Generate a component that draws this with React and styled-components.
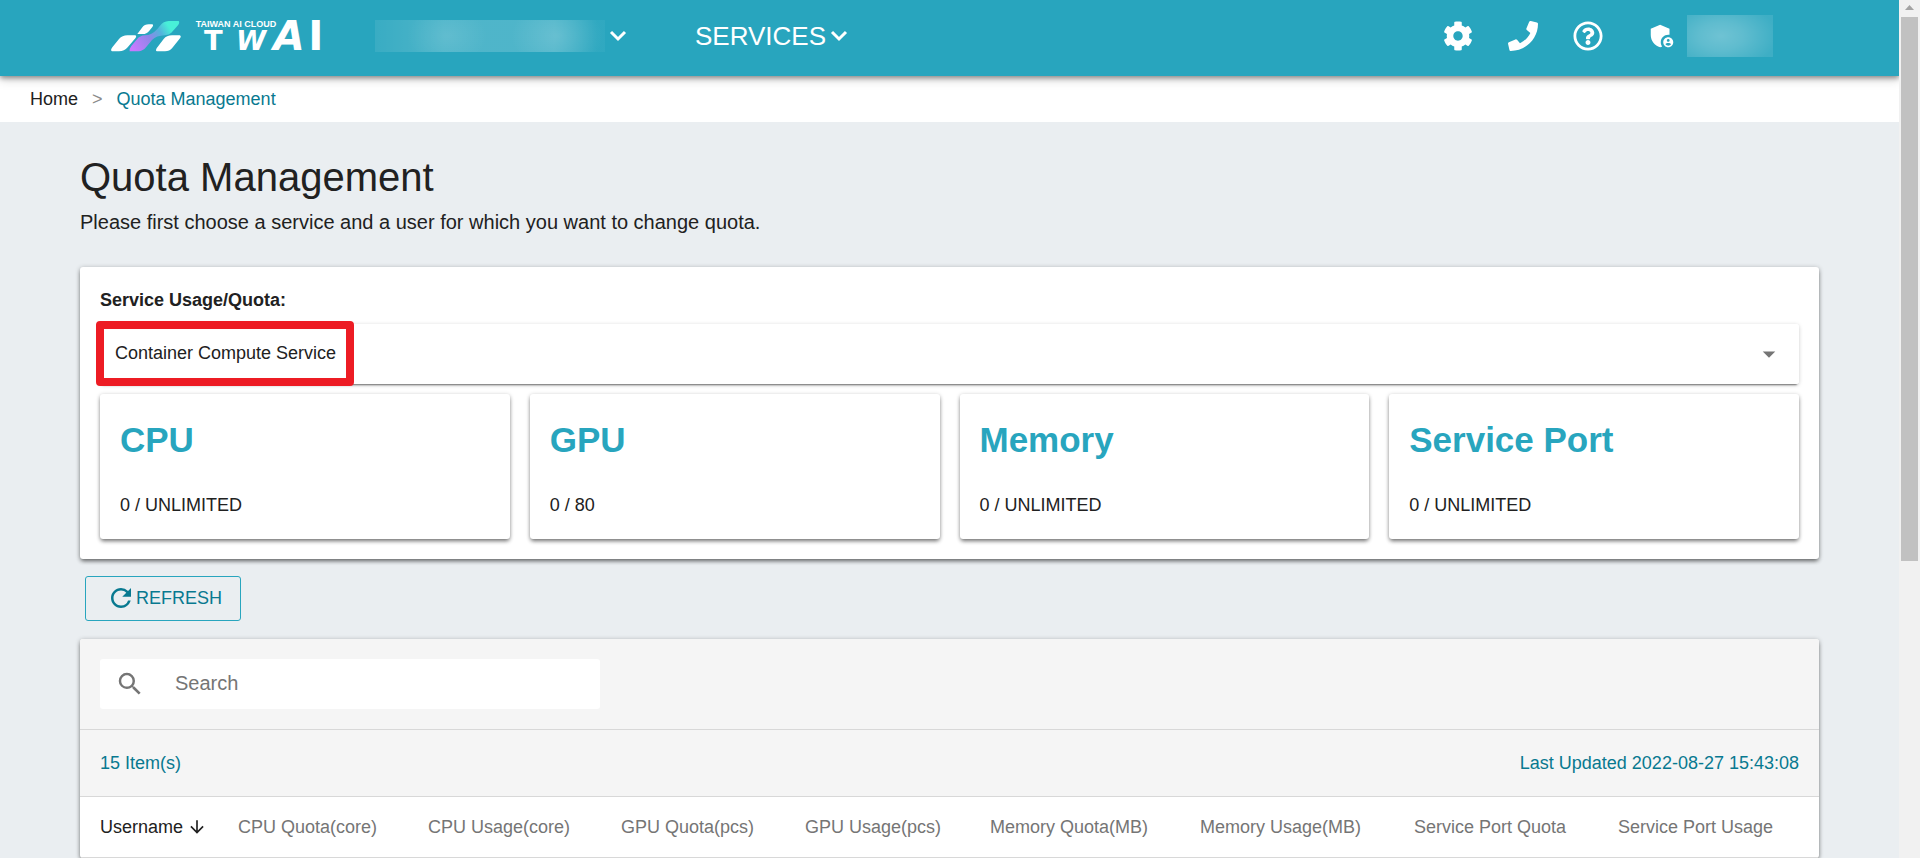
import styled, { createGlobalStyle } from "styled-components";
import { FaCog, FaPhone, FaRegQuestionCircle } from "react-icons/fa";
import {
    MdAdminPanelSettings,
    MdArrowDownward,
    MdArrowDropDown,
    MdRefresh,
    MdSearch,
} from "react-icons/md";

const GlobalStyle = createGlobalStyle`
    *{
        box-sizing: border-box;
    }
    body{
        margin: 0;
        background-color: #eaeef1;
        color: #212121;
        font-family: "Liberation Sans", Arial, sans-serif;
        font-size: 18px;
        line-height: 24px;
        overflow: hidden;
    }
    button, input, select{
        font: inherit;
        color: inherit;
    }
`;

const Window = styled.div`
    display: flex;
    height: 100vh;
    overflow: hidden;
`;

const Page = styled.div`
    flex: 1;
    min-width: 0;
    overflow: hidden;
`;

const Header = styled.header`
    position: relative;
    z-index: 1;
    display: flex;
    align-items: center;
    height: 76px;
    padding: 0 126px 4px 110px;
    background-color: #28a5be;
    color: #fff;
    box-shadow: 0 2px 5px rgba(0,0,0,.4), 0 4px 10px rgba(0,0,0,.15);
`;

const LogoLink = styled.a`
    display: flex;
    margin-right: 53px;
`;

const MenuButton = styled.button`
    display: flex;
    align-items: center;
    gap: 4px;
    padding: 0;
    margin-right: 68px;
    border: 0;
    background: none;
    font-size: 26px;
    line-height: 32px;
    cursor: pointer;
`;

const HiddenName = styled.span`
    width: 230px;
    height: 32px;
    background:
        radial-gradient(ellipse 40px 30px at 72px 16px, rgba(255,255,255,.1), transparent),
        radial-gradient(ellipse 46px 34px at 182px 16px, rgba(255,255,255,.14), transparent),
        linear-gradient(90deg, rgba(255,255,255,.08), rgba(255,255,255,.18) 30%, rgba(255,255,255,.18) 78%, rgba(255,255,255,.04) 96%);
`;

const HiddenUser = styled.span`
    width: 86px;
    height: 42px;
    background: radial-gradient(ellipse 56px 34px at 34px 21px, rgba(255,255,255,.33), rgba(255,255,255,.26) 40%, rgba(255,255,255,.1));
`;

const HeaderIcons = styled.nav`
    display: flex;
    align-items: center;
    gap: 35px;
    margin-left: auto;
`;

const IconButton = styled.button`
    display: flex;
    align-items: center;
    gap: 10px;
    padding: 0;
    border: 0;
    background: none;
    cursor: pointer;
`;

const UserButton = styled(IconButton)`
    margin-left: 9px;
`;

const Breadcrumb = styled.nav`
    display: flex;
    align-items: center;
    gap: 14px;
    height: 46px;
    padding: 0 30px;
    background-color: #fff;
    color: #8a8a8a;
`;

const Crumb = styled.a`
    color: ${props => props.$current ? "#087990" : "#212121"};
    text-decoration: none;
`;

const Content = styled.main`
    padding: 30px 80px 0;
`;

const Title = styled.h1`
    margin: 0;
    font-size: 40px;
    line-height: 50px;
    font-weight: normal;
`;

const Subtitle = styled.p`
    margin: 6px 0 31px;
    font-size: 20px;
    line-height: 28px;
`;

const Panel = styled.section`
    border-radius: 3px;
    background-color: #fff;
    box-shadow: 0 3px 4px -1px rgba(0,0,0,.45), 0 1px 5px rgba(0,0,0,.3);
`;

const UsagePanel = styled(Panel)`
    padding: 20px;
`;

const SelectLabel = styled.label`
    display: block;
    margin-bottom: 11px;
    line-height: 26px;
    font-weight: bold;
`;

const SelectBox = styled.div`
    position: relative;
    display: flex;
    align-items: center;
    margin-bottom: 10px;
    border-radius: 3px;
    box-shadow: 0 3px 2px -2px rgba(0,0,0,.5), 0 1px 4px rgba(0,0,0,.2);
    > svg{
        position: absolute;
        right: 15px;
        color: #757575;
        pointer-events: none;
    }
`;

const Select = styled.select`
    width: 100%;
    height: 60px;
    padding: 0 50px 2px 15px;
    border: 0;
    border-radius: 3px;
    background-color: #fff;
    appearance: none;
`;

// red frame laid over the selected service
const Highlight = styled.div`
    position: absolute;
    left: -4px;
    top: -3px;
    width: 258px;
    height: 65px;
    border: 8px solid #ed1c24;
    border-radius: 4px;
    pointer-events: none;
`;

const Cards = styled.div`
    display: grid;
    grid-template-columns: repeat(4, 1fr);
    gap: 20px;
`;

const Card = styled.div`
    padding: 20px 20px 22px;
    border-radius: 3px;
    box-shadow: 0 3px 4px -1px rgba(0,0,0,.45), 0 1px 4px rgba(0,0,0,.25);
`;

const CardTitle = styled.h2`
    margin: 0 0 27px;
    color: #28a5be;
    font-size: 35px;
    line-height: 52px;
`;

const RefreshButton = styled.button`
    display: flex;
    align-items: center;
    margin: 17px 5px 18px;
    height: 45px;
    padding: 0 18px 2px 20px;
    border: 1px solid #28a5be;
    border-radius: 3px;
    background: none;
    color: #087990;
    cursor: pointer;
`;

const TablePanel = styled(Panel)`
    overflow: hidden;
`;

const Toolbar = styled.div`
    padding: 20px;
    border-bottom: 1px solid #d8d8d8;
    background-color: #f5f5f5;
`;

const SearchBox = styled.label`
    display: flex;
    align-items: center;
    gap: 30px;
    max-width: 500px;
    height: 50px;
    padding: 0 15px;
    border-radius: 3px;
    background-color: #fff;
    color: #757575;
`;

const SearchInput = styled.input`
    flex: 1;
    padding: 0 0 2px;
    border: 0;
    outline: 0;
    background: none;
    font-size: 20px;
    &::placeholder{
        color: #757575;
        opacity: 1;
    }
`;

const TableInfo = styled.div`
    display: flex;
    align-items: center;
    justify-content: space-between;
    height: 67px;
    padding: 0 20px;
    border-bottom: 1px solid #d8d8d8;
    background-color: #f5f5f5;
    color: #087990;
`;

const Table = styled.table`
    width: 100%;
    table-layout: fixed;
    border-spacing: 0;
`;

const HeadCell = styled.th`
    height: 61px;
    padding: 0 0 0 20px;
    border-bottom: 1px solid #d8d8d8;
    color: ${props => props.$sorted ? "#212121" : "#757575"};
    font-weight: normal;
    text-align: left;
    white-space: nowrap;
`;

const SortButton = styled.button`
    display: flex;
    align-items: center;
    gap: 4px;
    padding: 0;
    border: 0;
    background: none;
    cursor: pointer;
`;

const ScrollTrack = styled.div`
    display: flex;
    flex-direction: column;
    align-items: center;
    width: 21px;
    background-color: #f1f1f1;
`;

const ScrollArrow = styled.svg`
    display: block;
    width: 9px;
    height: 5px;
    margin: 5px 0 7px;
`;

const ScrollThumb = styled.div`
    width: 17px;
    height: 544px;
    background-color: #c1c1c1;
`;

const services = [
    { name: "CPU", usage: "0 / UNLIMITED" },
    { name: "GPU", usage: "0 / 80" },
    { name: "Memory", usage: "0 / UNLIMITED" },
    { name: "Service Port", usage: "0 / UNLIMITED" },
];

const columns = [
    { name: "Username", width: 138, sorted: true },
    { name: "CPU Quota(core)", width: 190 },
    { name: "CPU Usage(core)", width: 193 },
    { name: "GPU Quota(pcs)", width: 184 },
    { name: "GPU Usage(pcs)", width: 185 },
    { name: "Memory Quota(MB)", width: 210 },
    { name: "Memory Usage(MB)", width: 214 },
    { name: "Service Port Quota", width: 204 },
    { name: "Service Port Usage", width: 221 },
];

function Logo() {
    return (
        <svg width="212" height="54" viewBox="60 30 636 162" role="img" aria-label="TWAI">
            <defs>
                <linearGradient id="wave" gradientUnits="userSpaceOnUse" x1="130" y1="150" x2="256" y2="72">
                    <stop offset="0" stopColor="#c879ff" />
                    <stop offset=".4" stopColor="#8f86e8" />
                    <stop offset=".65" stopColor="#52b5dc" />
                    <stop offset=".85" stopColor="#48f0d8" />
                </linearGradient>
            </defs>
            <path fill="#fff" d="M66 157Q60 154 67 145L87 120Q97 109 112 109H136Q141 111 136 118L113 145Q103 157 87 157Z" />
            <path fill="#fff" d="M142 105L156 86Q164 76 176 76H186Q192 77 187 84L178 95Q170 105 158 105Z" />
            <path fill="url(#wave)" d="M119 157Q117 150 124 141L141 121Q149 110 165 109Q185 109 202 90L210 80Q220 67 236 66H266Q270 70 264 79L244 101Q238 108 224 109Q199 110 186 123L168 145Q159 156 146 157Z" />
            <path fill="#fff" d="M201 157Q195 155 201 146L221 120Q230 109 246 109H269Q275 111 270 118L246 148Q239 157 225 157Z" />
            <g fill="#fff" fontWeight="bold">
                <text x="317" y="83" fontSize="27" fontFamily="Liberation Sans">TAIWAN AI CLOUD</text>
                <g fontFamily="DejaVu Sans">
                    <text x="342" y="154" fontSize="82">T</text>
                    <text x="438" y="154" fontSize="82" fontStyle="italic">W</text>
                    <text x="550" y="154" fontSize="122" fontStyle="italic">A</text>
                    <text x="655" y="154" fontSize="122">I</text>
                </g>
            </g>
        </svg>
    );
}

function Chevron() {
    return (
        <svg width="18" height="12" viewBox="0 0 18 12" aria-hidden="true">
            <path d="M2 2L9 9L16 2" fill="none" stroke="#fff" strokeWidth="3" />
        </svg>
    );
}

export default function App() {
    return (
        <Window>
            <GlobalStyle />
            <Page>
                <Header>
                    <LogoLink href="#">
                        <Logo />
                    </LogoLink>
                    <MenuButton aria-label="Project">
                        <HiddenName />
                        <Chevron />
                    </MenuButton>
                    <MenuButton>
                        SERVICES
                        <Chevron />
                    </MenuButton>
                    <HeaderIcons>
                        <IconButton aria-label="Settings"><FaCog size={30} /></IconButton>
                        <IconButton aria-label="Contact"><FaPhone size={30} /></IconButton>
                        <IconButton aria-label="Help"><FaRegQuestionCircle size={30} /></IconButton>
                        <UserButton aria-label="Account">
                            <MdAdminPanelSettings size={30} />
                            <HiddenUser />
                        </UserButton>
                    </HeaderIcons>
                </Header>
                <Breadcrumb aria-label="Breadcrumb">
                    <Crumb href="#">Home</Crumb>
                    <span>&gt;</span>
                    <Crumb href="#" $current>Quota Management</Crumb>
                </Breadcrumb>
                <Content>
                    <Title>Quota Management</Title>
                    <Subtitle>Please first choose a service and a user for which you want to change quota.</Subtitle>
                    <UsagePanel>
                        <SelectLabel htmlFor="service">Service Usage/Quota:</SelectLabel>
                        <SelectBox>
                            <Select id="service">
                                <option>Container Compute Service</option>
                            </Select>
                            <MdArrowDropDown size={30} />
                            <Highlight />
                        </SelectBox>
                        <Cards>
                            {services.map(service => (
                                <Card key={service.name}>
                                    <CardTitle>{service.name}</CardTitle>
                                    <div>{service.usage}</div>
                                </Card>
                            ))}
                        </Cards>
                    </UsagePanel>
                    <RefreshButton>
                        <MdRefresh size={30} />
                        REFRESH
                    </RefreshButton>
                    <TablePanel>
                        <Toolbar>
                            <SearchBox>
                                <MdSearch size={30} />
                                <SearchInput type="text" placeholder="Search" aria-label="Search" />
                            </SearchBox>
                        </Toolbar>
                        <TableInfo>
                            <span>15 Item(s)</span>
                            <span>Last Updated 2022-08-27 15:43:08</span>
                        </TableInfo>
                        <Table>
                            <colgroup>
                                {columns.map(column => (
                                    <col key={column.name} width={column.width} />
                                ))}
                            </colgroup>
                            <thead>
                                <tr>
                                    {columns.map(column => (
                                        <HeadCell key={column.name} scope="col" $sorted={column.sorted}>
                                            {column.sorted ? (
                                                <SortButton>
                                                    {column.name}
                                                    <MdArrowDownward size={20} />
                                                </SortButton>
                                            ) : column.name}
                                        </HeadCell>
                                    ))}
                                </tr>
                            </thead>
                        </Table>
                    </TablePanel>
                </Content>
            </Page>
            <ScrollTrack>
                <ScrollArrow viewBox="0 0 9 5">
                    <path d="M0 5L4.5 0L9 5Z" fill="#a3a3a3" />
                </ScrollArrow>
                <ScrollThumb />
            </ScrollTrack>
        </Window>
    );
}
